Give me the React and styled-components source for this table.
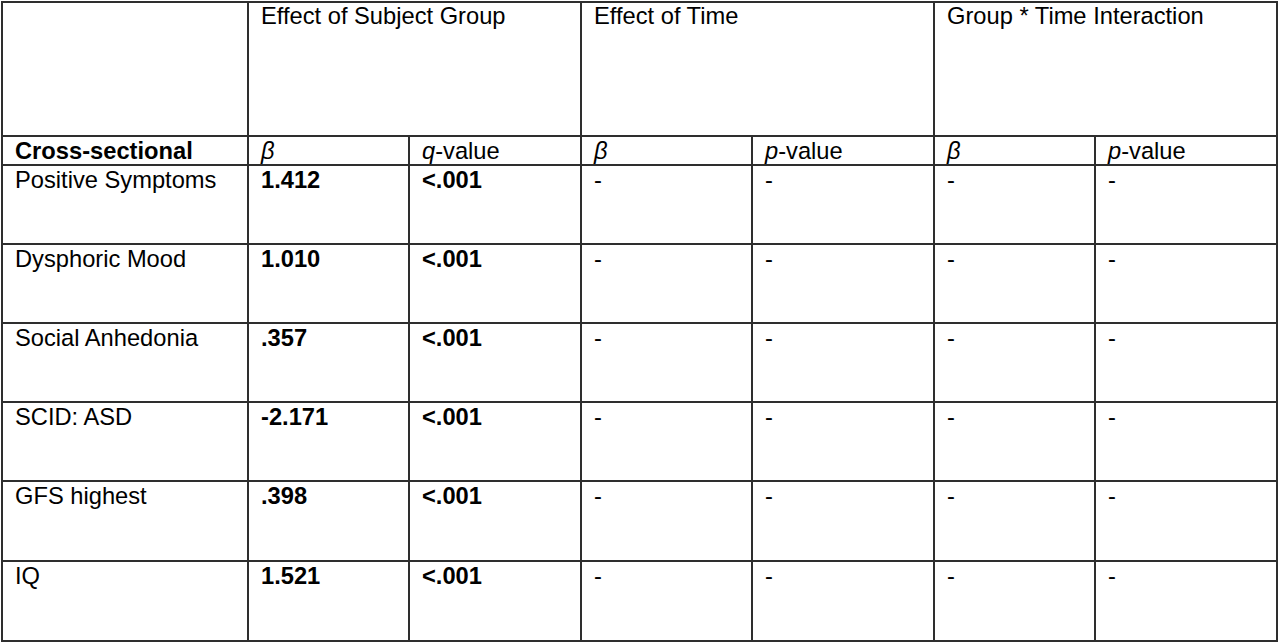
import React from "react";
import styled, { createGlobalStyle } from "styled-components";

const Global = createGlobalStyle`
  html, body { margin: 0; padding: 0; background: #ffffff; }
  body { font-family: "Liberation Sans", Arial, sans-serif; }
`;

const Page = styled.div`
  padding: 1px 0 0 1px;
`;

const Grid = styled.div`
  display: grid;
  grid-template-columns: 244px 159px 170px 169px 180px 159px 180px;
  grid-template-rows: 132px 27px 77px 77px 77px 77px 78px 78px;
  gap: 2px;
  padding: 2px;
  background: #2e2e2e;
  width: max-content;
`;

const Cell = styled.div`
  background: #ffffff;
  grid-column: span ${(p) => p.$span || 1};
  padding: ${(p) => (p.$head ? "0" : "1px")} 8px 0 12px;
  font-size: 23.7px;
  line-height: 27px;
  color: #000;
  font-weight: ${(p) => (p.$bold ? 700 : 400)};
  white-space: nowrap;
  overflow: hidden;
`;

const I = styled.i`
  font-style: italic;
`;

const rows = [
  ["Positive Symptoms", "1.412"],
  ["Dysphoric Mood", "1.010"],
  ["Social Anhedonia", ".357"],
  ["SCID: ASD", "-2.171"],
  ["GFS highest", ".398"],
  ["IQ", "1.521"],
];

export default function App() {
  return (
    <Page>
      <Global />
      <Grid>
        <Cell $head />
        <Cell $head $span={2}>Effect of Subject Group</Cell>
        <Cell $head $span={2}>Effect of Time</Cell>
        <Cell $head $span={2}>Group * Time Interaction</Cell>

        <Cell $bold>Cross-sectional</Cell>
        <Cell><I>β</I></Cell>
        <Cell><I>q</I>-value</Cell>
        <Cell><I>β</I></Cell>
        <Cell><I>p</I>-value</Cell>
        <Cell><I>β</I></Cell>
        <Cell><I>p</I>-value</Cell>

        {rows.map(([label, beta]) => (
          <React.Fragment key={label}>
            <Cell>{label}</Cell>
            <Cell $bold>{beta}</Cell>
            <Cell $bold>&lt;.001</Cell>
            <Cell>-</Cell>
            <Cell>-</Cell>
            <Cell>-</Cell>
            <Cell>-</Cell>
          </React.Fragment>
        ))}
      </Grid>
    </Page>
  );
}
